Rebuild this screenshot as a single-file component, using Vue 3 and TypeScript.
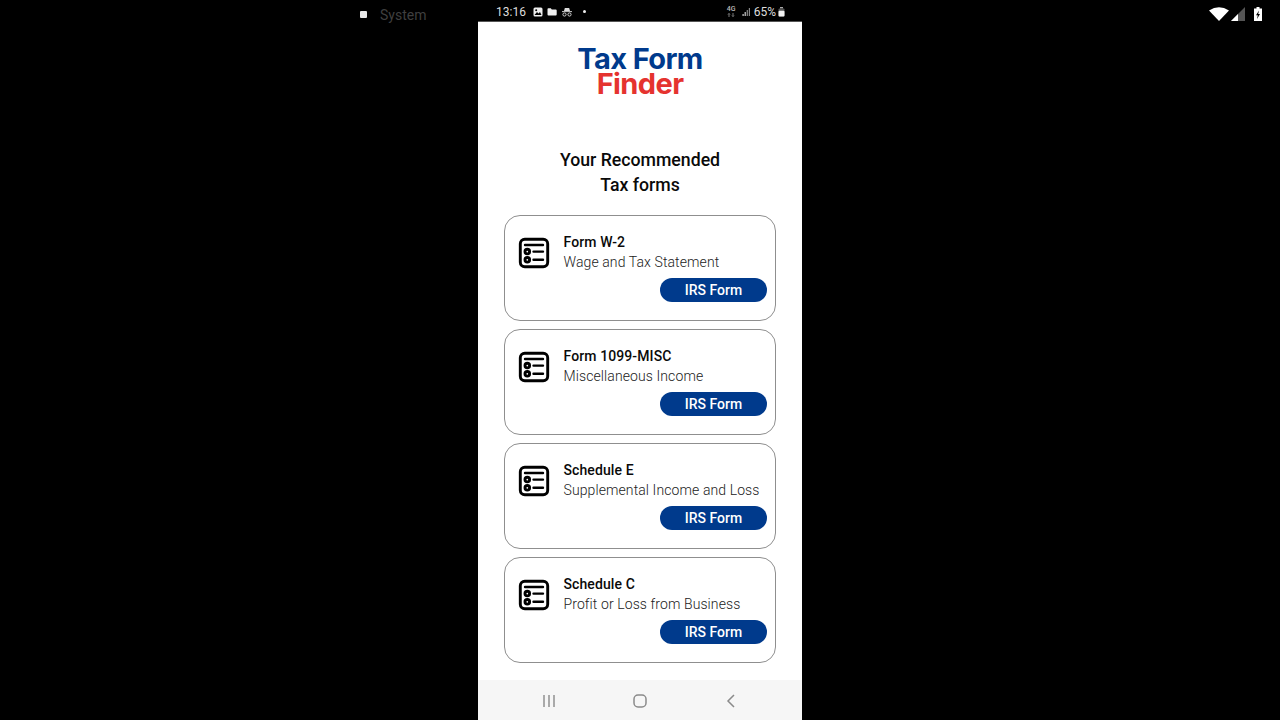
<script setup lang="ts">
const forms = [
  { name: "Form W-2", desc: "Wage and Tax Statement" },
  { name: "Form 1099-MISC", desc: "Miscellaneous Income" },
  { name: "Schedule E", desc: "Supplemental Income and Loss" },
  { name: "Schedule C", desc: "Profit or Loss from Business" },
];
</script>

<template>
  <div class="screen">
    <div class="side left">
      <span class="square"></span>
      <span class="system">System</span>
    </div>

    <div class="phone">
      <div class="status">
        <div class="status-group">
          <span class="time">13:16</span>
          <svg class="st-icon" width="10" height="10" viewBox="0 0 10 10">
            <rect x="0.5" y="0.5" width="9" height="9" rx="1.5" fill="#eee" />
            <path d="M1.5 8 4 5l1.5 1.5L7 5l1.5 3z" fill="#000" />
            <circle cx="3.2" cy="3.2" r="1" fill="#000" />
          </svg>
          <svg class="st-icon" width="10" height="10" viewBox="0 0 10 10">
            <path d="M0.5 2.2q0-.9.9-.9h2.4l1 1.1h3.9q1 0 1 1v4.2q0 1-1 1H1.5q-1 0-1-1z" fill="#eee" />
          </svg>
          <svg class="st-icon" width="12" height="10" viewBox="0 0 12 10" fill="none" stroke="#ddd">
            <path d="M3 4l.8-3h4.4L9 4z" fill="#ddd" stroke="none" />
            <path d="M1 4.6h10" stroke-width="0.9" />
            <circle cx="3.5" cy="7.5" r="1.6" stroke-width="0.9" />
            <circle cx="8.5" cy="7.5" r="1.6" stroke-width="0.9" />
          </svg>
          <span class="dot"></span>
        </div>
        <div class="status-group right">
          <div class="net">
            <span class="net-label">4G</span>
            <svg width="8" height="4" viewBox="0 0 8 4" fill="none" stroke="#999" stroke-width="0.8">
              <path d="M2 4V0.5M1 1.5l1-1 1 1M6 0v3.5M5 2.5l1 1 1-1" />
            </svg>
          </div>
          <svg class="bars" width="9" height="9" viewBox="0 0 9 9" fill="#ccc">
            <rect x="0.5" y="7" width="1.2" height="2" />
            <rect x="2.6" y="5" width="1.2" height="4" />
            <rect x="4.7" y="3" width="1.2" height="6" fill="#888" />
            <rect x="6.8" y="1" width="1.2" height="8" fill="#888" />
          </svg>
          <span class="battery-text">65%</span>
          <svg width="7" height="10" viewBox="0 0 7 10">
            <rect x="2" y="0" width="3" height="1.5" fill="#aaa" />
            <rect x="0.5" y="1.5" width="6" height="8" rx="1" fill="#555" />
            <rect x="0.5" y="3.8" width="6" height="5.7" rx="1" fill="#f2f2f2" />
          </svg>
        </div>
      </div>

      <main class="content">
        <div class="logo">
          <div class="logo-top">Tax Form</div>
          <div class="logo-bottom">Finder</div>
        </div>

        <h1 class="title">Your Recommended<br />Tax forms</h1>

        <div class="cards">
          <div v-for="form in forms" :key="form.name" class="card">
            <div class="card-top">
              <svg class="form-icon" width="32" height="32" viewBox="0 0 32 32" fill="none" stroke="#000" stroke-width="2.9">
                <rect x="2.3" y="2.3" width="27.4" height="27.4" rx="4.5" />
                <path d="M7 8h18" stroke-linecap="round" stroke-width="2.4" />
                <circle cx="9.3" cy="14.6" r="2.3" />
                <circle cx="9.3" cy="22.8" r="2.3" />
                <path d="M15.5 14.6h9.5M15.5 22.8h9.5" stroke-linecap="round" stroke-width="2.4" />
              </svg>
              <div class="card-text">
                <div class="card-name">{{ form.name }}</div>
                <div class="card-desc">{{ form.desc }}</div>
              </div>
            </div>
            <div class="card-action">
              <button class="irs-btn" type="button">IRS Form</button>
            </div>
          </div>
        </div>
      </main>

      <nav class="nav">
        <svg width="14" height="14" viewBox="0 0 14 14" stroke="#8a8a8a" stroke-width="1.4">
          <path d="M2 1v12M7 1v12M12 1v12" />
        </svg>
        <svg width="14" height="14" viewBox="0 0 14 14" fill="none" stroke="#8a8a8a" stroke-width="1.5">
          <rect x="1" y="1" width="12" height="12" rx="4" />
        </svg>
        <svg width="14" height="14" viewBox="0 0 14 14" fill="none" stroke="#8a8a8a" stroke-width="1.5">
          <path d="M10 1 4 7l6 6" />
        </svg>
      </nav>
    </div>

    <div class="side right-side">
      <svg width="20" height="14" viewBox="0 0 20 14">
        <path d="M0 3.6Q10-3.2 20 3.6L10 14z" fill="#fff" />
      </svg>
      <svg width="14" height="14" viewBox="0 0 14 14">
        <path d="M14 0v14H0z" fill="#555" />
        <path d="M7 7v7H0z" fill="#fff" />
      </svg>
      <svg class="batt" width="8" height="14" viewBox="0 0 8 14">
        <rect x="2.5" y="0" width="3" height="2" fill="#fff" />
        <rect x="0" y="1.5" width="8" height="12.5" fill="#fff" />
        <path d="M5 3.5 2 8.3h1.8L3 12l3-5H4.2z" fill="#000" />
      </svg>
    </div>
  </div>
</template>

<style>
html,
body {
  margin: 0;
  background: #000;
}
</style>

<style scoped>
.screen {
  width: 1280px;
  height: 720px;
  display: grid;
  grid-template-columns: 478px 324px 478px;
  background: #000;
  font-family: Roboto, "Liberation Sans", sans-serif;
  overflow: hidden;
}

.side {
  display: flex;
  align-items: flex-start;
  height: 28px;
}

.left {
  padding: 7px 0 0 360px;
  gap: 13px;
}

.square {
  width: 7px;
  height: 7px;
  margin-top: 4px;
  background: #e8e8e8;
  border-radius: 1px;
}

.system {
  color: #3f3f3f;
  font-size: 14px;
  line-height: 17px;
}

.right-side {
  justify-content: flex-end;
  align-items: center;
  gap: 2px;
  padding-right: 18px;
}

.right-side svg {
  display: block;
}

.batt {
  margin-left: 7px;
}

.phone {
  height: 720px;
  display: flex;
  flex-direction: column;
  background: #fff;
}

.status {
  height: 19px;
  flex: none;
  display: flex;
  justify-content: space-between;
  align-items: center;
  padding: 2px 17px 0 18px;
  background: #000;
  border-bottom: 1px solid #555;
  color: #ddd;
}

.status-group {
  display: flex;
  align-items: center;
  gap: 4px;
}

.status-group.right {
  gap: 2px;
}

.time {
  font-size: 12px;
  margin-right: 3px;
}

.dot {
  width: 3px;
  height: 3px;
  margin-left: 6px;
  border-radius: 50%;
  background: #eee;
}

.net {
  width: 9px;
  display: flex;
  flex-direction: column;
  align-items: center;
  margin-right: 4px;
}

.net-label {
  color: #bbb;
  font-size: 7px;
  line-height: 7px;
  font-weight: 500;
}

.net svg {
  display: block;
}

.battery-text {
  font-size: 12px;
  margin-left: 1px;
}

.content {
  flex: 1;
  display: flex;
  flex-direction: column;
  align-items: center;
}

.logo {
  margin-top: 24px;
  font-family: Inter, "Liberation Sans", sans-serif;
  font-size: 29px;
  font-weight: 700;
  line-height: 25px;
  letter-spacing: -0.6px;
  text-align: center;
}

.logo-top {
  color: #003a8c;
}

.logo-bottom {
  color: #e5332f;
}

.title {
  margin: 52px 0 0;
  font-size: 17.7px;
  font-weight: 500;
  line-height: 25px;
  text-align: center;
  color: #0a0a0a;
}

.cards {
  margin-top: 17px;
  display: flex;
  flex-direction: column;
  gap: 8px;
}

.card {
  width: 272px;
  height: 106px;
  box-sizing: border-box;
  padding: 18px 8px 0 13px;
  border: 1px solid #8f8f8f;
  border-radius: 16px;
  display: flex;
  flex-direction: column;
}

.card-top {
  display: flex;
  gap: 13.5px;
}

.form-icon {
  flex: none;
  margin-top: 2.5px;
}

.card-text {
  display: flex;
  flex-direction: column;
  gap: 3px;
}

.card-name {
  font-size: 14px;
  font-weight: 500;
  line-height: 17px;
  letter-spacing: 0.1px;
  color: #0a0a0a;
}

.card-desc {
  font-size: 14px;
  font-weight: 300;
  line-height: 17px;
  letter-spacing: 0.1px;
  color: #222;
}

.card-action {
  display: flex;
  justify-content: flex-end;
  margin-top: 7px;
}

.irs-btn {
  width: 107px;
  height: 24px;
  padding: 0;
  border: 0;
  border-radius: 12px;
  background: #003a8c;
  color: #fff;
  font-family: inherit;
  font-size: 14px;
  font-weight: 500;
}

.nav {
  height: 39px;
  padding-top: 1px;
  flex: none;
  display: flex;
  justify-content: center;
  align-items: center;
  gap: 77px;
  background: #f6f6f6;
}
</style>
